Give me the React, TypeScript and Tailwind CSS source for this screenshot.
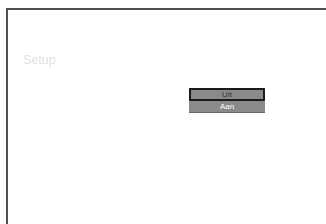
export default function App() {
  return (
    <div className="w-[326px] h-[224px] overflow-hidden bg-white" style={{ fontFamily: '"Liberation Sans", Arial, sans-serif' }}>
      <div className="ml-[6px] mt-[8px] h-[216px] border-t-2 border-l-2 border-[#505050]">
        <div className="pl-[15px] pt-[43px] text-[12.5px] leading-[15px] text-[#e2e2e2]">Setup</div>
        <div className="ml-[181px] mt-[20px] w-[76px] bg-[#8a8a8a] flex flex-col">
          <div className="h-[13px] border-2 border-[#1a1a1a] rounded-[1px] flex items-center justify-center text-[8px] leading-none text-[#333]">
            Uit
          </div>
          <div className="h-[12px] flex items-center justify-center text-[8px] leading-none text-white border-b border-[#6a6a6a]">
            Aan
          </div>
        </div>
      </div>
    </div>
  )
}
